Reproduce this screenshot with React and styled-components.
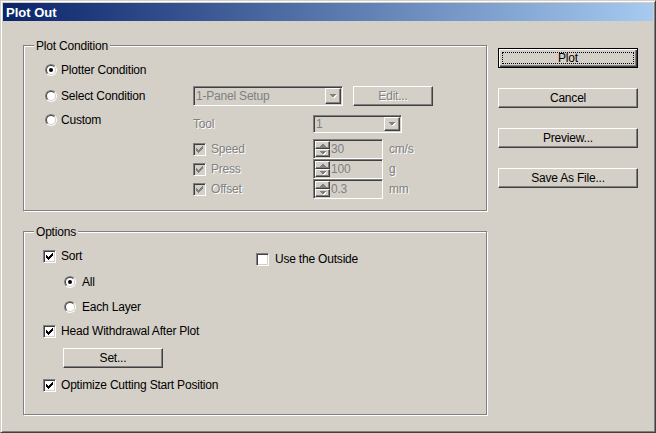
import React from "react";
import styled, { createGlobalStyle, css } from "styled-components";

const GlobalStyle = createGlobalStyle`
  html, body {
    margin: 0;
    padding: 0;
    background: #d4d0c8;
  }
  body {
    font-family: "Liberation Sans", Arial, sans-serif;
    font-size: 12px;
    color: #000;
  }
  * {
    box-sizing: border-box;
  }
`;

const raised = css`
  border: 1px solid;
  border-color: #fff #404040 #404040 #fff;
  box-shadow: inset -1px -1px 0 #808080, inset 1px 1px 0 #d4d0c8;
`;

const sunken = css`
  border: 1px solid;
  border-color: #808080 #fff #fff #808080;
  box-shadow: inset 1px 1px 0 #404040, inset -1px -1px 0 #d4d0c8;
`;

const disabledText = css`
  color: #808080;
  text-shadow: 1px 1px 0 #fff;
`;

const Window = styled.div`
  width: 656px;
  height: 433px;
  background: #d4d0c8;
  border: 1px solid;
  border-color: #d4d0c8 #404040 #404040 #d4d0c8;
  box-shadow: inset 1px 1px 0 #fff, inset -1px -1px 0 #808080;
  padding: 2px;
  display: flex;
  flex-direction: column;
  letter-spacing: -0.2px;
`;

const TitleBar = styled.div`
  height: 18px;
  flex: none;
  display: flex;
  align-items: center;
  padding-left: 3px;
  background: linear-gradient(to right, #0a246a, #a6caf0);
  color: #fff;
  font-weight: bold;
  font-size: 13px;
  letter-spacing: 0;
`;

const Body = styled.div`
  flex: 1;
  display: flex;
  gap: 11px;
  padding: 24px 0 0 20px;
`;

const LeftColumn = styled.div`
  display: flex;
  flex-direction: column;
  gap: 20px;
`;

const RightColumn = styled.div`
  display: flex;
  flex-direction: column;
  gap: 20px;
  padding-top: 3px;
`;

const GroupBox = styled.div`
  width: 464px;
  height: ${(p) => p.$height}px;
  border: 1px solid #808080;
  box-shadow: inset 1px 1px 0 #fff, 1px 1px 0 #fff;
  padding-left: ${(p) => p.$pad}px;
`;

const GroupTitle = styled.div`
  width: fit-content;
  margin: -7px 0 0 ${(p) => 10 - p.$pad}px;
  padding: 0 2px;
  line-height: 14px;
  background: #d4d0c8;
`;

const Row = styled.div`
  display: flex;
  align-items: center;
  height: 20px;
  margin-top: ${(p) => p.$mt || 0}px;
  margin-left: ${(p) => p.$indent || 0}px;
`;

const Cell = styled.div`
  width: ${(p) => p.$width}px;
  flex: none;
  display: flex;
  align-items: center;
  align-self: ${(p) => (p.$top ? "flex-start" : "center")};
  height: ${(p) => (p.$top ? "12px" : "auto")};
`;

const Label = styled.span`
  margin-left: ${(p) => p.$gap ?? 5}px;
  white-space: nowrap;
  ${(p) => p.$disabled && disabledText}
`;

const RadioOuter = styled.span`
  width: 12px;
  height: 12px;
  flex: none;
  border-radius: 50%;
  border: 1px solid;
  border-color: #808080 #fff #fff #808080;
  display: flex;
  align-items: center;
  justify-content: center;
`;

const RadioInner = styled.span`
  width: 10px;
  height: 10px;
  border-radius: 50%;
  border: 1px solid;
  border-color: #404040 #d4d0c8 #d4d0c8 #404040;
  background: #fff;
  display: flex;
  align-items: center;
  justify-content: center;

  &::after {
    content: "";
    width: 4px;
    height: 4px;
    border-radius: 50%;
    background: #000;
    display: ${(p) => (p.$checked ? "block" : "none")};
  }
`;

const CheckBoxBox = styled.span`
  width: 13px;
  height: 13px;
  flex: none;
  ${sunken}
  background: ${(p) => (p.$disabled ? "#d4d0c8" : "#fff")};
  display: flex;
  align-items: center;
  justify-content: center;
`;

const Button = styled.button`
  width: ${(p) => p.$width}px;
  height: 20px;
  flex: none;
  padding: 0;
  margin-left: ${(p) => p.$ml || 0}px;
  font-family: inherit;
  font-size: 12px;
  letter-spacing: -0.2px;
  background: #d4d0c8;
  color: #000;
  position: relative;
  ${raised}
  ${(p) => p.disabled && disabledText}
  ${(p) =>
    p.$default &&
    css`
      border: 1px solid #000;
      box-shadow: inset 1px 1px 0 #fff, inset -1px -1px 0 #404040,
        inset -2px -2px 0 #808080;
      &::after {
        content: "";
        position: absolute;
        inset: 3px;
        border: 1px dotted #000;
      }
    `}
`;

const Combo = styled.div`
  width: ${(p) => p.$width}px;
  height: ${(p) => p.$height}px;
  flex: none;
  align-self: ${(p) => (p.$top ? "flex-start" : "center")};
  margin-top: ${(p) => (p.$top ? 1 : 0)}px;
  ${sunken}
  background: #d4d0c8;
  padding: 1px;
  display: flex;
  align-items: stretch;
`;

const ComboText = styled.span`
  flex: 1;
  display: flex;
  align-items: center;
  padding-left: 1px;
  color: #808080;
`;

const DropButton = styled.span`
  width: 16px;
  flex: none;
  ${raised}
  display: flex;
  align-items: center;
  justify-content: center;
`;

const SpinBox = styled.div`
  width: 70px;
  height: 20px;
  flex: none;
  ${sunken}
  background: #d4d0c8;
  padding: 1px;
  display: flex;
`;

const Spinner = styled.div`
  width: 15px;
  flex: none;
  display: flex;
  flex-direction: column;
`;

const SpinButton = styled.span`
  flex: 1;
  ${raised}
  display: flex;
  align-items: center;
  justify-content: center;
`;

const SpinValue = styled.span`
  display: flex;
  align-items: center;
  padding-left: 1px;
  color: #808080;
`;

const Unit = styled.span`
  margin-left: 6px;
  ${disabledText}
`;

const OptionsGrid = styled.div`
  display: grid;
  grid-template-columns: 213px auto;
  align-items: start;
`;

const OptionsColumn = styled.div`
  display: flex;
  flex-direction: column;
`;

const Arrow = ({ up, disabled }) => (
  <svg width="7" height="4" viewBox="0 0 7 4" shapeRendering="crispEdges">
    {disabled && (
      <polygon
        points={up ? "1,4 4,1 7,4" : "1,1 8,1 4.5,4.5"}
        fill="#fff"
      />
    )}
    <polygon
      points={up ? "0,4 3.5,0.5 7,4" : "0,0 7,0 3.5,3.5"}
      fill={disabled ? "#808080" : "#000"}
    />
  </svg>
);

const DropArrow = () => (
  <svg width="8" height="5" viewBox="0 0 8 5" shapeRendering="crispEdges">
    <polygon points="1,1 8,1 4.5,4.5" fill="#fff" />
    <polygon points="0,0 7,0 3.5,3.5" fill="#808080" />
  </svg>
);

const Radio = ({ checked, children, gap }) => (
  <>
    <RadioOuter>
      <RadioInner $checked={checked} />
    </RadioOuter>
    <Label $gap={gap}>{children}</Label>
  </>
);

const CheckBox = ({ checked, disabled, children, gap }) => (
  <>
    <CheckBoxBox $disabled={disabled}>
      {checked && (
        <svg width="7" height="7" viewBox="0 0 7 7" shapeRendering="crispEdges">
          <polygon
            points="0,2 2,4 7,-1 7,2 2,7 0,5"
            fill={disabled ? "#808080" : "#000"}
          />
        </svg>
      )}
    </CheckBoxBox>
    <Label $gap={gap} $disabled={disabled}>
      {children}
    </Label>
  </>
);

const ComboBox = ({ width, height, value, top }) => (
  <Combo $width={width} $height={height} $top={top}>
    <ComboText>{value}</ComboText>
    <DropButton>
      <DropArrow />
    </DropButton>
  </Combo>
);

const Spin = ({ value }) => (
  <SpinBox>
    <Spinner>
      <SpinButton>
        <Arrow up disabled />
      </SpinButton>
      <SpinButton>
        <Arrow disabled />
      </SpinButton>
    </Spinner>
    <SpinValue>{value}</SpinValue>
  </SpinBox>
);

const settings = [
  { name: "Speed", value: "30", unit: "cm/s", mt: 5 },
  { name: "Press", value: "100", unit: "g" },
  { name: "Offset", value: "0.3", unit: "mm" },
];

const App = () => {
  return (
    <>
      <GlobalStyle />
      <Window>
        <TitleBar>Plot Out</TitleBar>
        <Body>
          <LeftColumn>
            <GroupBox $height={166} $pad={21}>
              <GroupTitle $pad={21}>Plot Condition</GroupTitle>
              <Row $mt={7}>
                <Cell $width={148}>
                  <Radio checked gap={4}>
                    Plotter Condition
                  </Radio>
                </Cell>
              </Row>
              <Row $mt={6}>
                <Cell $width={148}>
                  <Radio gap={4}>Select Condition</Radio>
                </Cell>
                <ComboBox width={150} height={20} value="1-Panel Setup" />
                <Button $width={80} $ml={10} disabled>
                  Edit...
                </Button>
              </Row>
              <Row $mt={8}>
                <Cell $width={148} $top>
                  <Radio gap={4}>Custom</Radio>
                </Cell>
                <Cell $width={120}>
                  <Label $gap={0} $disabled>
                    Tool
                  </Label>
                </Cell>
                <ComboBox width={89} height={18} value="1" top />
              </Row>
              {settings.map((s) => (
                <Row key={s.name} $mt={s.mt}>
                  <Cell $width={148} />
                  <Cell $width={120}>
                    <CheckBox checked disabled gap={5}>
                      {s.name}
                    </CheckBox>
                  </Cell>
                  <Spin value={s.value} />
                  <Unit>{s.unit}</Unit>
                </Row>
              ))}
            </GroupBox>

            <GroupBox $height={184} $pad={19}>
              <GroupTitle $pad={19}>Options</GroupTitle>
              <OptionsGrid>
                <OptionsColumn>
                  <Row $mt={7}>
                    <CheckBox checked>Sort</CheckBox>
                  </Row>
                  <Row $mt={6} $indent={21}>
                    <Radio checked gap={6}>
                      All
                    </Radio>
                  </Row>
                  <Row $mt={5} $indent={21}>
                    <Radio gap={6}>Each Layer</Radio>
                  </Row>
                  <Row $mt={4}>
                    <CheckBox checked>Head Withdrawal After Plot</CheckBox>
                  </Row>
                  <Row $mt={7} $indent={20}>
                    <Button $width={100}>Set...</Button>
                  </Row>
                  <Row $mt={7}>
                    <CheckBox checked>Optimize Cutting Start Position</CheckBox>
                  </Row>
                </OptionsColumn>
                <OptionsColumn>
                  <Row $mt={10}>
                    <CheckBox gap={6}>Use the Outside</CheckBox>
                  </Row>
                </OptionsColumn>
              </OptionsGrid>
            </GroupBox>
          </LeftColumn>

          <RightColumn>
            <Button $width={140} $default>
              Plot
            </Button>
            <Button $width={140}>Cancel</Button>
            <Button $width={140}>Preview...</Button>
            <Button $width={140}>Save As File...</Button>
          </RightColumn>
        </Body>
      </Window>
    </>
  );
};

export default App;
